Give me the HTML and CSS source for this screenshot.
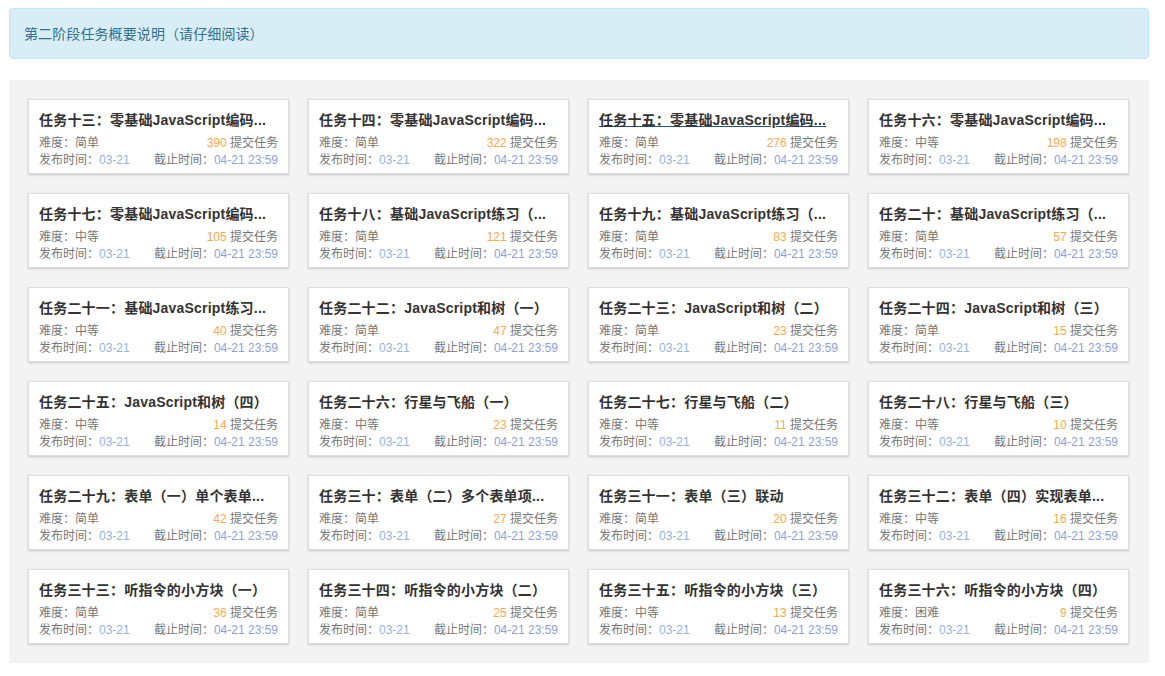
FILE: index.html
```html
<!DOCTYPE html>
<html lang="zh-CN">
<head>
<meta charset="utf-8">
<title>第二阶段任务</title>
<link rel="stylesheet" href="styles.css">
</head>
<body>
<div class="page">
  <div class="alert">第二阶段任务概要说明（请仔细阅读）</div>
  <div class="board">
    <div class="card"><div class="title">任务十三：零基础JavaScript编码...</div><div class="row"><span>难度：简单</span><span><em>390</em> 提交任务</span></div><div class="row"><span>发布时间：<i>03-21</i></span><span>截止时间：<b>04-21 23:59</b></span></div></div>
    <div class="card"><div class="title">任务十四：零基础JavaScript编码...</div><div class="row"><span>难度：简单</span><span><em>322</em> 提交任务</span></div><div class="row"><span>发布时间：<i>03-21</i></span><span>截止时间：<b>04-21 23:59</b></span></div></div>
    <div class="card"><div class="title hover">任务十五：零基础JavaScript编码...</div><div class="row"><span>难度：简单</span><span><em>276</em> 提交任务</span></div><div class="row"><span>发布时间：<i>03-21</i></span><span>截止时间：<b>04-21 23:59</b></span></div></div>
    <div class="card"><div class="title">任务十六：零基础JavaScript编码...</div><div class="row"><span>难度：中等</span><span><em>198</em> 提交任务</span></div><div class="row"><span>发布时间：<i>03-21</i></span><span>截止时间：<b>04-21 23:59</b></span></div></div>

    <div class="card"><div class="title">任务十七：零基础JavaScript编码...</div><div class="row"><span>难度：中等</span><span><em>105</em> 提交任务</span></div><div class="row"><span>发布时间：<i>03-21</i></span><span>截止时间：<b>04-21 23:59</b></span></div></div>
    <div class="card"><div class="title">任务十八：基础JavaScript练习（...</div><div class="row"><span>难度：简单</span><span><em>121</em> 提交任务</span></div><div class="row"><span>发布时间：<i>03-21</i></span><span>截止时间：<b>04-21 23:59</b></span></div></div>
    <div class="card"><div class="title">任务十九：基础JavaScript练习（...</div><div class="row"><span>难度：简单</span><span><em>83</em> 提交任务</span></div><div class="row"><span>发布时间：<i>03-21</i></span><span>截止时间：<b>04-21 23:59</b></span></div></div>
    <div class="card"><div class="title">任务二十：基础JavaScript练习（...</div><div class="row"><span>难度：简单</span><span><em>57</em> 提交任务</span></div><div class="row"><span>发布时间：<i>03-21</i></span><span>截止时间：<b>04-21 23:59</b></span></div></div>

    <div class="card"><div class="title">任务二十一：基础JavaScript练习...</div><div class="row"><span>难度：中等</span><span><em>40</em> 提交任务</span></div><div class="row"><span>发布时间：<i>03-21</i></span><span>截止时间：<b>04-21 23:59</b></span></div></div>
    <div class="card"><div class="title">任务二十二：JavaScript和树（一）</div><div class="row"><span>难度：简单</span><span><em>47</em> 提交任务</span></div><div class="row"><span>发布时间：<i>03-21</i></span><span>截止时间：<b>04-21 23:59</b></span></div></div>
    <div class="card"><div class="title">任务二十三：JavaScript和树（二）</div><div class="row"><span>难度：简单</span><span><em>23</em> 提交任务</span></div><div class="row"><span>发布时间：<i>03-21</i></span><span>截止时间：<b>04-21 23:59</b></span></div></div>
    <div class="card"><div class="title">任务二十四：JavaScript和树（三）</div><div class="row"><span>难度：简单</span><span><em>15</em> 提交任务</span></div><div class="row"><span>发布时间：<i>03-21</i></span><span>截止时间：<b>04-21 23:59</b></span></div></div>

    <div class="card"><div class="title">任务二十五：JavaScript和树（四）</div><div class="row"><span>难度：中等</span><span><em>14</em> 提交任务</span></div><div class="row"><span>发布时间：<i>03-21</i></span><span>截止时间：<b>04-21 23:59</b></span></div></div>
    <div class="card"><div class="title">任务二十六：行星与飞船（一）</div><div class="row"><span>难度：中等</span><span><em>23</em> 提交任务</span></div><div class="row"><span>发布时间：<i>03-21</i></span><span>截止时间：<b>04-21 23:59</b></span></div></div>
    <div class="card"><div class="title">任务二十七：行星与飞船（二）</div><div class="row"><span>难度：中等</span><span><em>11</em> 提交任务</span></div><div class="row"><span>发布时间：<i>03-21</i></span><span>截止时间：<b>04-21 23:59</b></span></div></div>
    <div class="card"><div class="title">任务二十八：行星与飞船（三）</div><div class="row"><span>难度：中等</span><span><em>10</em> 提交任务</span></div><div class="row"><span>发布时间：<i>03-21</i></span><span>截止时间：<b>04-21 23:59</b></span></div></div>

    <div class="card"><div class="title">任务二十九：表单（一）单个表单...</div><div class="row"><span>难度：简单</span><span><em>42</em> 提交任务</span></div><div class="row"><span>发布时间：<i>03-21</i></span><span>截止时间：<b>04-21 23:59</b></span></div></div>
    <div class="card"><div class="title">任务三十：表单（二）多个表单项...</div><div class="row"><span>难度：简单</span><span><em>27</em> 提交任务</span></div><div class="row"><span>发布时间：<i>03-21</i></span><span>截止时间：<b>04-21 23:59</b></span></div></div>
    <div class="card"><div class="title">任务三十一：表单（三）联动</div><div class="row"><span>难度：简单</span><span><em>20</em> 提交任务</span></div><div class="row"><span>发布时间：<i>03-21</i></span><span>截止时间：<b>04-21 23:59</b></span></div></div>
    <div class="card"><div class="title">任务三十二：表单（四）实现表单...</div><div class="row"><span>难度：中等</span><span><em>16</em> 提交任务</span></div><div class="row"><span>发布时间：<i>03-21</i></span><span>截止时间：<b>04-21 23:59</b></span></div></div>

    <div class="card"><div class="title">任务三十三：听指令的小方块（一）</div><div class="row"><span>难度：简单</span><span><em>36</em> 提交任务</span></div><div class="row"><span>发布时间：<i>03-21</i></span><span>截止时间：<b>04-21 23:59</b></span></div></div>
    <div class="card"><div class="title">任务三十四：听指令的小方块（二）</div><div class="row"><span>难度：简单</span><span><em>25</em> 提交任务</span></div><div class="row"><span>发布时间：<i>03-21</i></span><span>截止时间：<b>04-21 23:59</b></span></div></div>
    <div class="card"><div class="title">任务三十五：听指令的小方块（三）</div><div class="row"><span>难度：中等</span><span><em>13</em> 提交任务</span></div><div class="row"><span>发布时间：<i>03-21</i></span><span>截止时间：<b>04-21 23:59</b></span></div></div>
    <div class="card"><div class="title">任务三十六：听指令的小方块（四）</div><div class="row"><span>难度：困难</span><span><em>9</em> 提交任务</span></div><div class="row"><span>发布时间：<i>03-21</i></span><span>截止时间：<b>04-21 23:59</b></span></div></div>
  </div>
</div>
</body>
</html>
```

FILE: styles.css
```css
* { box-sizing: border-box; }
html, body { margin: 0; padding: 0; background: #fff; }
body {
  font-family: "Liberation Sans", Arial, "Noto Sans CJK SC", sans-serif;
  font-size: 14px;
  color: #333;
}
.page {
  width: 1140px;
  margin: 8px 0 0 9px;
}
.alert {
  background: #d9edf7;
  border: 1px solid #bce8f1;
  border-radius: 4px;
  color: #31708f;
  padding: 15px 14px 13px;
  line-height: 21px;
  height: 51px;
  letter-spacing: 0.1px;
}
.board {
  margin-top: 21px;
  background: #f3f3f3;
  padding: 19px 20px 19px 19px;
  display: grid;
  grid-template-columns: repeat(4, 1fr);
  column-gap: 19px;
  row-gap: 19px;
}
.card {
  background: #fff;
  border: 1px solid #dcdcdc;
  box-shadow: 0 1px 2px rgba(0, 0, 0, 0.18);
  height: 75px;
  padding: 10px 10px 0 10px;
}
.title {
  font-size: 14px;
  font-weight: bold;
  color: #333;
  line-height: 20px;
  height: 20px;
  margin-bottom: 5px;
  white-space: nowrap;
  overflow: hidden;
  letter-spacing: 0.2px;
}
.title.hover {
  text-decoration: underline;
  text-decoration-color: #23527c;
}
.row {
  display: flex;
  justify-content: space-between;
  font-size: 12px;
  line-height: 17px;
  color: #777;
}
.row em {
  font-style: normal;
  color: #f5a94e;
}
.row i {
  font-style: normal;
  color: #92b4dc;
}
.row b {
  font-weight: normal;
  color: #8f9fd6;
}
```
